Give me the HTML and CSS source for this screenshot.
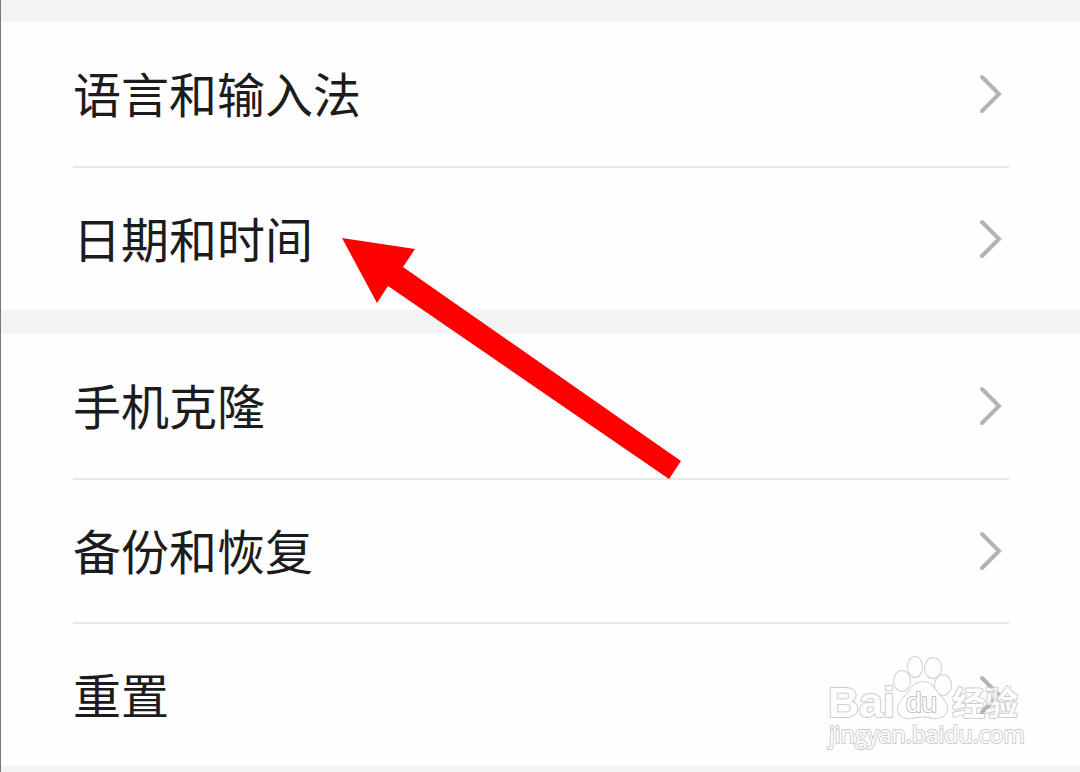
FILE: index.html
```html
<!DOCTYPE html>
<html lang="zh-CN">
<head>
    <meta charset="UTF-8">
    <meta name="viewport" content="width=device-width, initial-scale=1.0">
    <title>设置</title>
    <link rel="stylesheet" href="styles.css">
</head>
<body>
    <main class="settings">
        <ul class="group">
            <li><a class="item" href="#language"><span class="label">语言和输入法</span>
                <svg class="chevron" viewBox="0 0 24 40" aria-hidden="true"><path d="M3 3L20 20L3 37"/></svg></a></li>
            <li><a class="item" href="#datetime"><span class="label">日期和时间</span>
                <svg class="chevron" viewBox="0 0 24 40" aria-hidden="true"><path d="M3 3L20 20L3 37"/></svg></a></li>
        </ul>
        <ul class="group">
            <li><a class="item" href="#clone"><span class="label">手机克隆</span>
                <svg class="chevron" viewBox="0 0 24 40" aria-hidden="true"><path d="M3 3L20 20L3 37"/></svg></a></li>
            <li><a class="item" href="#backup"><span class="label">备份和恢复</span>
                <svg class="chevron" viewBox="0 0 24 40" aria-hidden="true"><path d="M3 3L20 20L3 37"/></svg></a></li>
            <li><a class="item" href="#reset"><span class="label">重置</span>
                <svg class="chevron" viewBox="0 0 24 40" aria-hidden="true"><path d="M3 3L20 20L3 37"/></svg></a></li>
        </ul>

        <!-- red pointer -->
        <svg class="arrow" viewBox="0 0 340 242" aria-hidden="true">
            <path d="M0 0L73 11L61 29L339 223L327 241L46 48L35 65Z"/>
        </svg>

        <!-- watermark -->
        <svg class="watermark" viewBox="0 0 200 96" role="img" aria-label="Baidu经验">
            <text class="brand" x="3" y="61">Bai</text>
            <g class="paw">
                <ellipse cx="77" cy="25" rx="8" ry="10"/>
                <ellipse cx="90" cy="11" rx="7" ry="10"/>
                <ellipse cx="108" cy="12" rx="8" ry="10"/>
                <ellipse cx="118" cy="29" rx="8" ry="10"/>
                <path d="M98 26C90 26 87 31 83 37C79 42 73 46 73 53C73 60 80 63 87 62C94 60 102 60 108 62C116 63 122 59 122 52C122 45 116 42 112 36C108 30 105 26 98 26Z"/>
            </g>
            <text class="du" x="81" y="56">du</text>
            <text class="cn" x="127" y="59">经验</text>
            <text class="url" x="4" y="87">jingyan.baidu.com</text>
        </svg>
    </main>
</body>
</html>
```
FILE: styles.css
```css
* {
    box-sizing: border-box;
}

body {
    margin: 0;
    background: #f3f3f3;
    color: #1c1c1c;
    font-family: "Noto Sans CJK SC", sans-serif;
}

.settings {
    position: relative;
    padding: 22px 0 6px;
    border-left: 1px solid #777;
    overflow: hidden;
}

.group {
    margin: 0;
    padding: 0 71px 0 72px;
    list-style: none;
    background: #fefefe;
}

.group + .group {
    margin-top: 24px;
}

.group li + li {
    border-top: 2px solid #e6e6e6;
}

.item {
    display: flex;
    align-items: center;
    justify-content: space-between;
    height: 144px;
    padding-right: 6px;
    color: inherit;
    font-size: 48px;
    line-height: 72px;
    text-decoration: none;
}

.group li + li .item {
    height: 142px;
}

.label {
    padding-bottom: 4px;
}

.chevron {
    width: 24px;
    height: 40px;
    fill: none;
    stroke: #b3b3b3;
    stroke-width: 4px;
    stroke-linecap: round;
}

.arrow {
    position: absolute;
    top: 238px;
    left: 341px;
    width: 340px;
    height: 242px;
    fill: #fe0000;
}

.watermark {
    position: absolute;
    right: 55px;
    bottom: 20px;
    width: 200px;
    height: 96px;
    overflow: visible;
    fill: #fff;
    stroke: #b8b8b8;
    stroke-width: 2px;
    stroke-linejoin: round;
    paint-order: stroke;
    opacity: 0.7;
}

.brand {
    font: bold 43px "Liberation Sans", sans-serif;
}

.paw {
    stroke: #c0c0c0;
    stroke-width: 2px;
}

.du {
    font: 28px "Liberation Sans", sans-serif;
    stroke: #a8a8a8;
}

.cn {
    font: bold 33px "Noto Sans CJK SC", sans-serif;
}

.url {
    font: 23px "Open Sans", sans-serif;
}
```
